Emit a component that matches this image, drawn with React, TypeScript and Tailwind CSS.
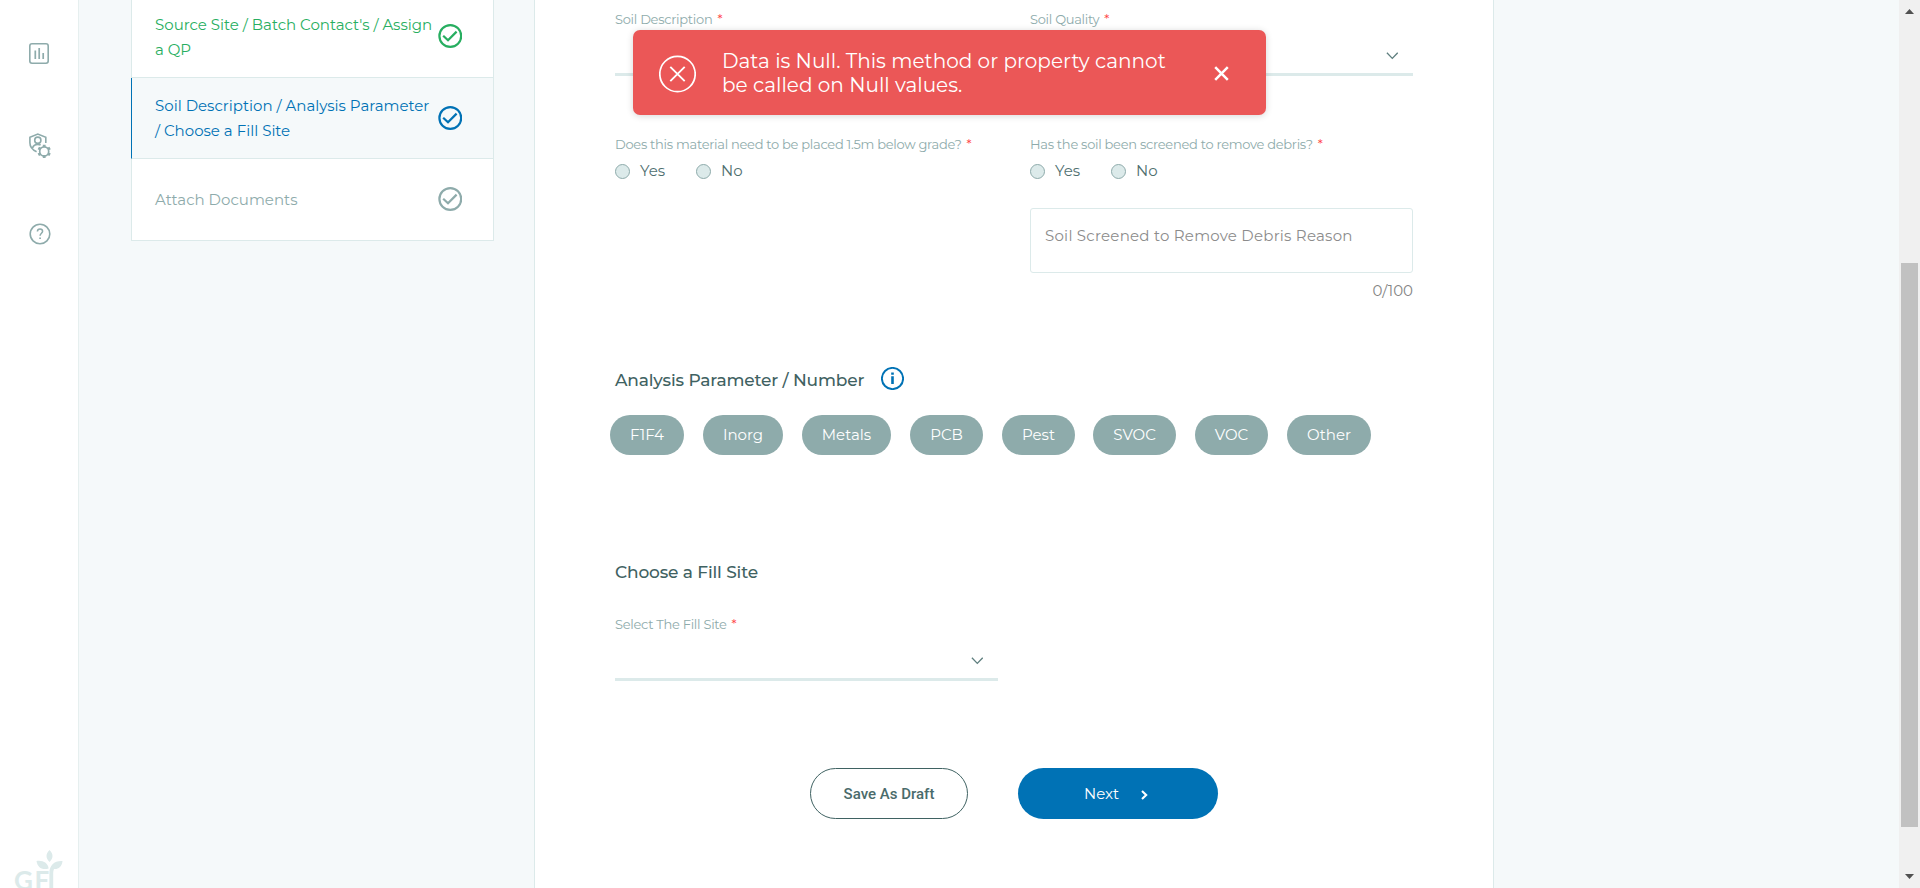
import React from "react";

const chips = [
  { label: "F1F4", size: "w-[74px] mr-[19px]" },
  { label: "Inorg", size: "w-[80px] mr-[19px]" },
  { label: "Metals", size: "w-[89px] mr-[19px]" },
  { label: "PCB", size: "w-[73px] mr-[19px]" },
  { label: "Pest", size: "w-[73px] mr-[18px]" },
  { label: "SVOC", size: "w-[83px] mr-[19px]" },
  { label: "VOC", size: "w-[73px] mr-[19px]" },
  { label: "Other", size: "w-[84px]" },
];

function CheckCircle() {
  return (
    <svg className="h-6 w-6 shrink-0" viewBox="0 0 24 24" fill="none" stroke="currentColor">
      <circle cx="12.3" cy="12" r="10.9" strokeWidth="2.2" />
      <path d="M5.2 11.7 L10 16.2 L18.6 7.6" strokeWidth="2.2" />
    </svg>
  );
}

function Chevron() {
  return (
    <svg className="h-2 w-3 text-[#5f7f7f]" viewBox="0 0 12 8" fill="none" stroke="currentColor">
      <path d="M0.9 0.8 L6.3 6.4 L11.7 0.8" strokeWidth="1.3" />
    </svg>
  );
}

function FieldLabel({ text }: { text: string }) {
  return (
    <div className="flex h-5 items-center gap-[5px] whitespace-nowrap text-[13px] leading-5 tracking-[-0.28px] text-[#8eabab]">
      <span>{text}</span>
      <span className="text-[#ff4040]">*</span>
    </div>
  );
}

function Radio({ label }: { label: string }) {
  return (
    <label className="flex items-center gap-[10px] text-[15px] text-[#4f6f6f]">
      <span className="h-[15px] w-[15px] rounded-full border border-[#8eabab] bg-[#dceaea]" />
      <span>{label}</span>
    </label>
  );
}

function YesNo() {
  return (
    <div className="mt-[7px] flex h-[21px] items-center">
      <div className="w-[81px]"><Radio label="Yes" /></div>
      <Radio label="No" />
    </div>
  );
}

function Sidebar() {
  return (
    <aside className="flex w-[79px] shrink-0 flex-col border-r border-[#e6efef] bg-white text-[#8eabab]">
      <svg className="ml-[29px] mt-[43px] h-[21px] w-5 shrink-0" viewBox="0 0 20 21" fill="none" stroke="currentColor">
        <rect x="0.8" y="0.8" width="18.4" height="19.4" rx="2.2" strokeWidth="1.6" />
        <path d="M6.3 7.5 V16 M10.2 5 V16 M14.2 10 V16" strokeWidth="1.7" />
      </svg>
      <svg className="ml-[29px] mt-[69px] h-[26px] w-[22px] shrink-0" viewBox="0 0 22 26" fill="none" stroke="currentColor" strokeWidth="1.6">
        <path d="M7.6 18.8 C3.2 16.8 0.9 14 0.9 9.8 V4.2 L8.8 1.1 L16.8 4.2 V10" />
        <circle cx="8.8" cy="7.2" r="3.1" />
        <path d="M3.4 15.4 C4.2 12.4 6.2 11.4 8.8 11.4 C10 11.4 10.8 11.6 11.6 12" />
        <circle cx="15.2" cy="18.4" r="4.5" strokeWidth="1.7" />
        <path d="M15.2 11.8 V14 M15.2 22.8 V25 M9.3 15 L11.3 16.1 M19.1 20.7 L21.1 21.8 M9.3 21.8 L11.3 20.7 M19.1 16.1 L21.1 15" strokeWidth="2.8" />
      </svg>
      <svg className="ml-[29px] mt-[64px] h-[22px] w-[22px] shrink-0" viewBox="0 0 22 22" fill="none" stroke="currentColor">
        <circle cx="11" cy="11" r="9.8" strokeWidth="1.6" />
        <path d="M8.4 8.5 C8.4 6.8 9.5 5.9 11 5.9 C12.5 5.9 13.6 6.9 13.6 8.3 C13.6 10.1 11.1 10.4 11.1 12.8" strokeWidth="1.5" />
        <path d="M11.1 14.4 V16.1" strokeWidth="1.7" />
      </svg>
      <div className="mt-[604px] flex h-[39px] pl-[14px] text-[#dceaea]">
        <span className="mt-[16px] w-[22px] font-[Lato] text-[26px] font-bold leading-[30px] tracking-[1.5px]">GF</span>
        <svg className="h-[39px] w-[27px]" viewBox="0 0 27 39" fill="currentColor">
          <path d="M13.5 1 C17.5 5 17.5 9 13.5 13 C9.5 9 9.5 5 13.5 1 Z" />
          <path d="M0.5 12 C7 11 12 14 12.6 19.5 C6 21.5 1.5 18.5 0.5 12 Z" />
          <path d="M26.5 12 C26 18 22 20.5 18 20 C17.4 21.5 17.2 23 17.2 25 V39 H13.4 V24 C13.4 16 18.5 11.5 26.5 12 Z" />
        </svg>
      </div>
    </aside>
  );
}

function Stepper() {
  return (
    <nav className="ml-[52px] h-[241px] w-[363px] shrink-0 border border-t-0 border-[#dceaea] bg-white text-[15px] leading-[25px]">
      <div className="flex h-[78px] justify-between whitespace-nowrap border-b border-[#dceaea] pl-[23px] pr-[31px] pt-3 text-[#27ae60]">
        <div>
          <div>Source Site / Batch Contact's / Assign</div>
          <div>a QP</div>
        </div>
        <div className="pt-3"><CheckCircle /></div>
      </div>
      <div className="-ml-px flex h-[81px] justify-between whitespace-nowrap border-b border-l border-b-[#dceaea] border-l-[#0072b5] bg-[#f5f9fa] pl-[23px] pr-[31px] pt-[15px] text-[#0072b5]">
        <div>
          <div>Soil Description / Analysis Parameter</div>
          <div>/ Choose a Fill Site</div>
        </div>
        <div className="pt-[13px]"><CheckCircle /></div>
      </div>
      <div className="flex h-[81px] justify-between pl-[23px] pr-[31px] pt-7 text-[#8eabab]">
        <span>Attach Documents</span>
        <CheckCircle />
      </div>
    </nav>
  );
}

function Toast() {
  return (
    <div className="absolute left-[633px] top-[30px] flex h-[85px] w-[633px] items-center rounded-[7px] bg-[#eb5757] pl-[26px] text-white shadow-[0_1px_7px_rgba(0,0,0,0.16)]">
      <svg className="mt-[2px] h-[38px] w-[37px] shrink-0" viewBox="0 0 37 38" fill="none" stroke="currentColor">
        <circle cx="18.5" cy="19" r="17.7" strokeWidth="1.7" />
        <path d="M11.3 11.8 L25.7 26.2 M25.7 11.8 L11.3 26.2" strokeWidth="1.9" />
      </svg>
      <div className="ml-[26px] w-[492px] whitespace-nowrap text-[20px] leading-6 tracking-[0.02px]">
        <div>Data is Null. This method or property cannot</div>
        <div>be called on Null values.</div>
      </div>
      <svg className="mt-[2px] h-[15px] w-[15px]" viewBox="0 0 15 15" fill="none" stroke="currentColor">
        <path d="M1.2 1.2 L13.8 13.8 M13.8 1.2 L1.2 13.8" strokeWidth="2.5" />
      </svg>
    </div>
  );
}

function Scrollbar() {
  return (
    <div className="flex w-[21px] shrink-0 flex-col items-center bg-[#f0f0f0] text-[#505050]">
      <svg className="mt-[9px] h-[5px] w-[9px]" viewBox="0 0 9 5" fill="currentColor"><path d="M0 5 L4.5 0 L9 5 Z" /></svg>
      <div className="mt-[249px] h-[564px] w-[17px] bg-[#c1c1c1]" />
      <svg className="mt-[47px] h-[5px] w-[9px]" viewBox="0 0 9 5" fill="currentColor"><path d="M0 0 L4.5 5 L9 0 Z" /></svg>
    </div>
  );
}

export default function App() {
  return (
    <div className="relative flex h-[888px] w-[1920px] overflow-hidden bg-[#f5f9fa] font-[Montserrat,Inter,sans-serif]">
      <Sidebar />
      <Stepper />
      <main className="ml-10 h-[888px] w-[960px] border-x border-[#dceaea] bg-white pl-20 pr-20">
        <div className="grid grid-cols-[383px_383px] gap-x-8">
          <div className="h-[76px] border-b-[3px] border-[#dceaea] pt-[9px]">
            <FieldLabel text="Soil Description" />
          </div>
          <div className="h-[76px] border-b-[3px] border-[#dceaea] pt-[9px]">
            <FieldLabel text="Soil Quality" />
            <div className="mt-[23px] flex justify-end pr-[15px]"><Chevron /></div>
          </div>
        </div>
        <div className="mt-[58px] grid grid-cols-[383px_383px] gap-x-8">
          <div>
            <FieldLabel text="Does this material need to be placed 1.5m below grade?" />
            <YesNo />
          </div>
          <div>
            <FieldLabel text="Has the soil been screened to remove debris?" />
            <YesNo />
            <div className="mt-[26px] h-[65px] rounded-[3px] border border-[#dceaea] pl-[14px] pt-[15px] text-[15px] leading-6 tracking-[0.24px] text-[#8c8c8c]">
              Soil Screened to Remove Debris Reason
            </div>
            <div className="mt-[8px] h-5 text-right text-[15px] leading-5 text-[#858585]">0/100</div>
          </div>
        </div>
        <div className="mt-[65px] flex h-[25px]">
          <h2 className="w-[266px] whitespace-nowrap pt-[2px] text-[17px] font-medium leading-6 tracking-[-0.14px] text-[#3f6262]">Analysis Parameter / Number</h2>
          <svg className="mt-px h-[23px] w-[23px] text-[#0072b5]" viewBox="0 0 23 23" fill="none" stroke="currentColor">
            <circle cx="11.5" cy="11.5" r="10.6" strokeWidth="1.9" />
            <path d="M11.5 9.2 V17 M11.5 5.6 V7.8" strokeWidth="2.6" />
          </svg>
        </div>
        <div className="-ml-[5px] mt-6 flex h-10">
          {chips.map((chip) => (
            <button key={chip.label} className={`flex h-10 shrink-0 items-center justify-center rounded-full bg-[#8eabab] text-[15px] text-white ${chip.size}`}>
              {chip.label}
            </button>
          ))}
        </div>
        <h2 className="mt-[105px] text-[17px] font-medium leading-6 tracking-[-0.14px] text-[#3f6262]">Choose a Fill Site</h2>
        <div className="mt-[30px] h-[67px] w-[383px] border-b-[3px] border-[#dceaea]">
          <FieldLabel text="Select The Fill Site" />
          <div className="mt-[23px] flex justify-end pr-[15px]"><Chevron /></div>
        </div>
        <div className="ml-[195px] mt-[87px] flex gap-[50px]">
          <button className="h-[51px] w-[158px] rounded-full border border-[#3f6262] pt-px font-[Roboto] text-[15px] font-medium text-[#4a6b6b]">Save As Draft</button>
          <button className="flex h-[51px] w-[200px] items-center rounded-full bg-[#0072b5] pl-[66px] text-[15px] text-white">
            <span className="mt-px">Next</span>
            <svg className="ml-[22px] mt-[3px] h-[10px] w-[7px]" viewBox="0 0 7 10" fill="none" stroke="currentColor">
              <path d="M1 1 L5.2 5 L1 9" strokeWidth="2.1" />
            </svg>
          </button>
        </div>
      </main>
      <div className="grow" />
      <Scrollbar />
      <Toast />
    </div>
  );
}
